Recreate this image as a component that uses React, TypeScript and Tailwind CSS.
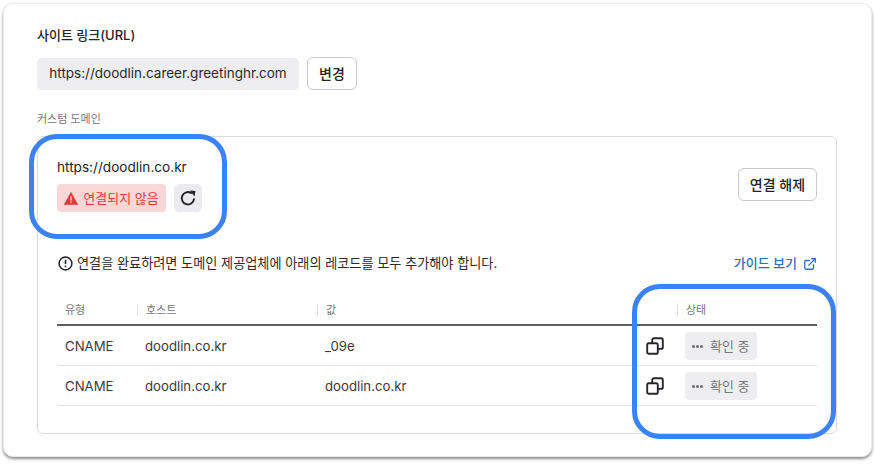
import React from 'react';
import { ExternalLink } from 'lucide-react';

const FONT = 'font-[Inter,"Noto_Sans_CJK_KR",sans-serif]';

const RECORDS = [
  { type: 'CNAME', host: 'doodlin.co.kr', value: '_09e' },
  { type: 'CNAME', host: 'doodlin.co.kr', value: 'doodlin.co.kr' },
];

function CopyIcon() {
  return (
    <svg width="18" height="18" viewBox="0 0 18 18" fill="none" stroke="#27272a" strokeWidth="1.9">
      <rect x="1.2" y="6.2" width="10.6" height="10.6" rx="1.6" />
      <path d="M6.2 6.2V3a1.7 1.7 0 0 1 1.7-1.7h7.2A1.7 1.7 0 0 1 16.8 3v7.2a1.7 1.7 0 0 1-1.7 1.7h-3.3" />
    </svg>
  );
}

function WarnIcon() {
  return (
    <svg width="14" height="13" viewBox="0 0 14 13">
      <path d="M7 0.4 13.8 12.6H0.2Z" fill="#e5383b" stroke="#e5383b" strokeLinejoin="round" strokeWidth="0.6" />
      <rect x="6.4" y="4.2" width="1.3" height="4.4" fill="#f9d7d6" />
      <rect x="6.4" y="9.5" width="1.3" height="1.4" fill="#f9d7d6" />
    </svg>
  );
}

function RefreshIcon() {
  return (
    <svg width="17" height="17" viewBox="0 0 16 16" fill="none">
      <path d="M13.2 8.6A5.8 5.8 0 1 1 10.6 2.9" stroke="#232326" strokeWidth="1.8" strokeLinecap="round" />
      <path d="M9.4 0.4 14.6 1 13.6 6.2Z" fill="#232326" />
    </svg>
  );
}

function InfoIcon() {
  return (
    <svg width="15" height="15" viewBox="0 0 15 15" fill="none">
      <circle cx="7.5" cy="7.5" r="6.4" stroke="#232326" strokeWidth="1.5" />
      <path d="M7.5 3.8v4.4" stroke="#232326" strokeWidth="1.6" />
      <path d="M7.5 9.6v1.6" stroke="#232326" strokeWidth="1.6" />
    </svg>
  );
}

function HeadCell({ label, className }: { label: string; className: string }) {
  return (
    <div className={`flex items-center ${className}`}>
      <span className="text-[11px] leading-[12px] text-[#77777c] pl-2 border-l border-[#e1e1e4]">{label}</span>
    </div>
  );
}

export default function App() {
  return (
    <div className={`${FONT} w-[876px] h-[464px] bg-white overflow-hidden pt-[3px] pl-[3px]`}>
      <div className="relative w-[869px] h-[454px] bg-white rounded-[10px] border border-[#ececee] shadow-[0_2px_3px_rgba(0,0,0,0.45)] pl-[33px] pt-[21px]">
        <h1 className="text-[13px] leading-[20px] font-medium text-[#232326]">사이트 링크(URL)</h1>

        <div className="flex items-center gap-2 mt-[12px]">
          <div className="w-[262px] h-[32px] rounded-[5px] bg-[#eeeef0] flex items-center justify-center text-[13.5px] text-[#2a2a2d]">
            https://doodlin.career.greetinghr.com
          </div>
          <button className="w-[50px] h-[33px] rounded-[6px] border border-[#c9c9cd] bg-white text-[14px] font-medium text-[#232326]">
            변경
          </button>
        </div>

        <p className="mt-[21px] text-[11px] leading-[16px] text-[#77777c]">커스텀 도메인</p>

        <div className="mt-[9px] w-[800px] h-[298px] rounded-[6px] border border-[#dcdcdf] px-[19px] pt-[21px]">
          <div className="flex items-start justify-between">
            <div>
              <p className="text-[13.6px] leading-[18px] text-[#232326]">https://doodlin.co.kr</p>
              <div className="flex items-center gap-2 mt-[8px]">
                <div className="h-[28px] w-[109px] rounded-[4px] bg-[#f9d7d6] flex items-center justify-center gap-[5px] text-[13px] text-[#e5383b]">
                  <WarnIcon />
                  <span className="pt-[2px]">연결되지 않음</span>
                </div>
                <button className="w-[28px] h-[28px] rounded-[5px] bg-[#ebebef] flex items-center justify-center">
                  <RefreshIcon />
                </button>
              </div>
            </div>
            <button className="mt-[10px] w-[79px] h-[33px] rounded-[6px] border border-[#c9c9cd] bg-white text-[14px] font-medium text-[#232326]">
              연결 해제
            </button>
          </div>

          <div className="flex items-center justify-between mt-[42px] h-[20px]">
            <div className="flex items-center gap-[4px] text-[13.15px] text-[#2a2a2d] pl-[1px]">
              <InfoIcon />
              <span>연결을 완료하려면 도메인 제공업체에 아래의 레코드를 모두 추가해야 합니다.</span>
            </div>
            <a className="flex items-center gap-[6px] text-[13px] font-medium text-[#2b6fc4]">
              가이드 보기
              <ExternalLink size={14} strokeWidth={2.2} color="#2b6fc4" />
            </a>
          </div>

          <div className="mt-[22px] w-[760px]">
            <div className="flex h-[30px] items-center border-b-2 border-[#5f5f63]">
              <div className="w-[80px] pl-2 text-[11px] leading-[12px] text-[#77777c]">유형</div>
              <HeadCell label="호스트" className="w-[180px]" />
              <HeadCell label="값" className="w-[360px]" />
              <HeadCell label="상태" className="w-[140px]" />
            </div>
            {RECORDS.map((r) => (
              <div key={r.value} className="flex h-[40px] items-center border-b border-[#e1e1e4] text-[13.2px] text-[#3a3a3d]">
                <div className="w-[80px] pl-2 pt-[2px]">{r.type}</div>
                <div className="w-[180px] pl-2 pt-[2px]">{r.host}</div>
                <div className="w-[320px] pl-2 pt-[2px]">{r.value}</div>
                <div className="w-[40px] flex justify-center pr-[4px]">
                  <CopyIcon />
                </div>
                <div className="w-[140px] pl-2">
                  <div className="w-[72px] h-[28px] rounded-[4px] bg-[#eeeef0] flex items-center justify-center gap-[7px] pt-[2px] text-[13px] text-[#77777c]">
                    <span className="flex gap-[1.5px]">
                      <i className="w-[2.5px] h-[2.5px] rounded-full bg-[#6b6b70]" />
                      <i className="w-[2.5px] h-[2.5px] rounded-full bg-[#6b6b70]" />
                      <i className="w-[2.5px] h-[2.5px] rounded-full bg-[#6b6b70]" />
                    </span>
                    확인 중
                  </div>
                </div>
              </div>
            ))}
          </div>
        </div>

        {/* callout outlines drawn over the card */}
        <div className="absolute left-[25px] top-[130px] w-[198px] h-[105px] rounded-[28px] border-[5px] border-[#3b82f6] pointer-events-none" />
        <div className="absolute left-[628px] top-[280px] w-[204px] h-[155px] rounded-[28px] border-[5px] border-[#3b82f6] pointer-events-none" />
      </div>
    </div>
  );
}
